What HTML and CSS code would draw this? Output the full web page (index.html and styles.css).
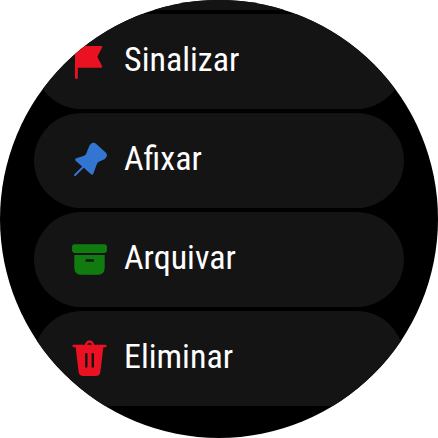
FILE: index.html
```html
<!DOCTYPE html>
<html lang="pt">
<head>
<meta charset="utf-8">
<title>Ações</title>
<link rel="stylesheet" href="styles.css">
</head>
<body>
<main class="watch">
  <div class="row previous"></div>
  <div class="row">
    <svg class="icon" viewBox="0 0 36 36"><path fill="#ea1222" d="M4.2 2H29.3Q31 2 30.1 3.5L25.6 12.2Q25.3 12.8 25.6 13.4L30.1 22Q31 23.7 29.3 23.7H5.8V33.7Q5.8 35 4.4 35Q3 35 3 33.7V3Q3 2 4.2 2Z"/></svg>
    <span class="label">Sinalizar</span>
  </div>
  <div class="row">
    <svg class="icon" viewBox="0 0 36 36"><path fill="#3376d2" d="M18.6 1.2Q21.4-1.6 24.3 1L33.7 9.4Q36.4 12.2 33.5 15.2Q32.8 16 31.9 16.4L27.4 18.5Q25.5 19.3 24.8 21.2L21.4 30.6Q20.5 32.7 18.8 31.1L11.8 24.7L3.5 33Q2.4 33.3 2.2 32.7Q1.9 32 2.4 31.3L10.2 23.4L3.8 17.9Q2.2 16.2 4.4 15.3L12.1 12.7Q13.4 12.2 14 11L17.3 3Q17.8 1.9 18.6 1.2Z"/></svg>
    <span class="label">Afixar</span>
  </div>
  <div class="row">
    <svg class="icon" viewBox="0 0 36 36"><rect x="0.1" y="2.2" width="34.8" height="8.8" rx="2.4" fill="#107c10"/><path fill="#107c10" fill-rule="evenodd" d="M2.3 12.9H32.7V25.4Q32.7 32.8 25.3 32.8H9.7Q2.3 32.8 2.3 25.4ZM14.6 17.2A1.25 1.25 0 0 0 14.6 19.7H20.8A1.25 1.25 0 0 0 20.8 17.2Z"/></svg>
    <span class="label">Arquivar</span>
  </div>
  <div class="row last">
    <svg class="icon" viewBox="0 0 36 36"><path fill="none" stroke="#ea1222" stroke-width="2.3" stroke-linecap="round" d="M1.6 5H33.5M13.9 5A3.65 4.5 0 0 1 21.2 5"/><path fill="#ea1222" fill-rule="evenodd" d="M3.5 5H31.5L28.4 30.8Q27.9 35 23.7 35H11.3Q7.1 35 6.6 30.8ZM13.1 13.2V25.6A1.2 1.2 0 0 0 15.5 25.6V13.2A1.2 1.2 0 0 0 13.1 13.2ZM19.6 13.2V25.6A1.2 1.2 0 0 0 22 25.6V13.2A1.2 1.2 0 0 0 19.6 13.2Z"/></svg>
    <span class="label">Eliminar</span>
  </div>
</main>
</body>
</html>
```
FILE: styles.css
```css
body {
  margin: 0;
  background: #fff;
}

.watch {
  width: 438px;
  height: 438px;
  box-sizing: border-box;
  padding: 0 34px;
  display: flex;
  flex-direction: column;
  gap: 4px;
  overflow: hidden;
  border-radius: 50%;
  background: #000;
}

.row {
  flex: none;
  height: 95px;
  box-sizing: border-box;
  padding-left: 38px;
  display: flex;
  align-items: center;
  border-radius: 47.5px;
  background: #141414;
}

.previous {
  height: 10px;
  border-radius: 0;
}

.last {
  border-radius: 47.5px 47.5px 0 0;
}

.icon {
  width: 36px;
  height: 36px;
  flex: none;
  margin-top: 1px;
  overflow: visible;
}

.label {
  margin-left: 16px;
  margin-top: -5px;
  font-family: "Roboto Condensed", Roboto, sans-serif;
  font-stretch: 75%;
  font-size: 34px;
  line-height: 40px;
  color: #fff;
}
```
